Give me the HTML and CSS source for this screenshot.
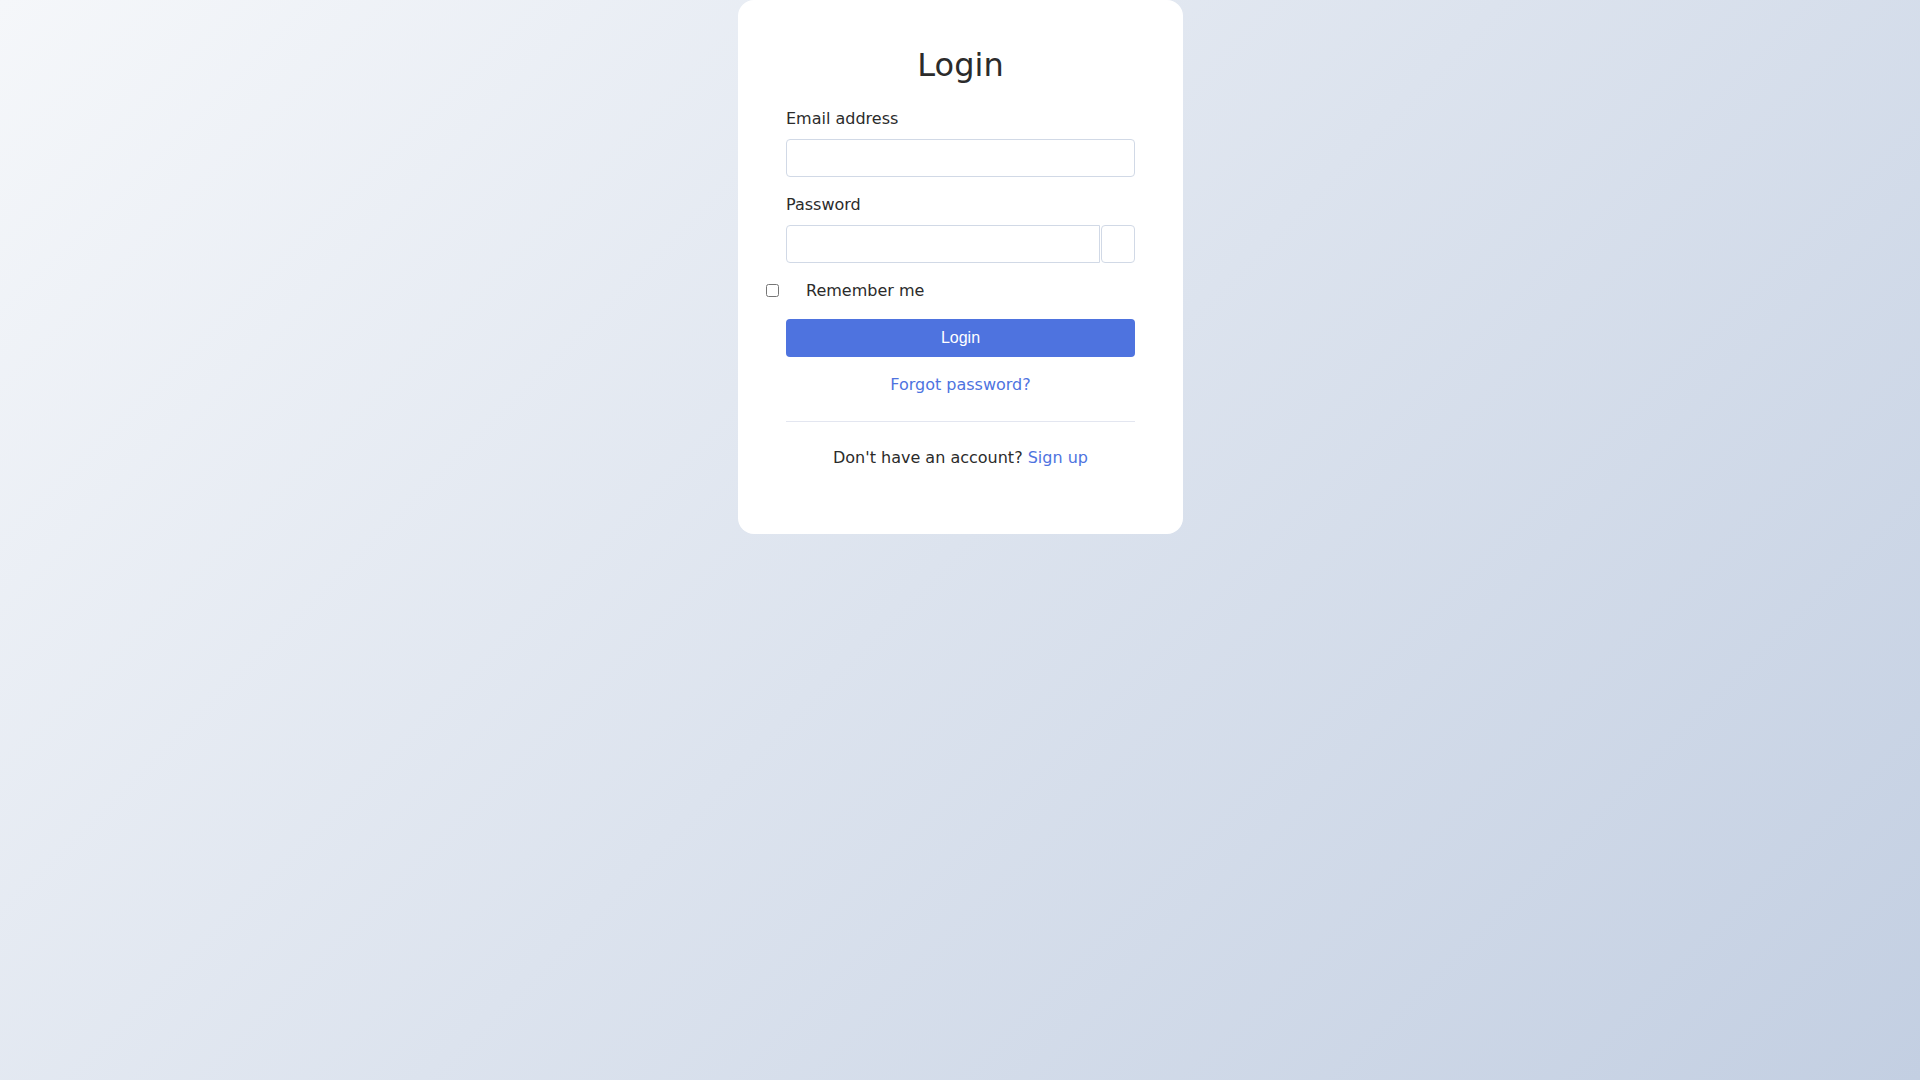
FILE: index.html
```html
<!DOCTYPE html>
<html lang="en">
<head>
<meta charset="utf-8">
<title>Login</title>
<link rel="stylesheet" href="styles.css">
</head>
<body>
<main class="page">
  <section class="card">
    <h1 class="title">Login</h1>
    <form class="form">
      <div class="group">
        <label class="label" for="email">Email address</label>
        <input class="input" id="email" type="email">
      </div>
      <div class="group">
        <label class="label" for="password">Password</label>
        <div class="input-row">
          <input class="input input-pass" id="password" type="password">
          <button class="toggle" type="button"></button>
        </div>
      </div>
      <div class="check-row">
        <input class="check" id="remember" type="checkbox">
        <label class="check-label" for="remember">Remember me</label>
      </div>
      <button class="btn" type="button">Login</button>
      <div class="forgot"><a class="link" href="#">Forgot password?</a></div>
    </form>
    <hr class="divider">
    <p class="signup">Don't have an account? <a class="link" href="#">Sign up</a></p>
  </section>
</main>
</body>
</html>
```
FILE: styles.css
```css
html, body {
  margin: 0;
  padding: 0;
  height: 100%;
}
body {
  background: linear-gradient(135deg, #f5f7fa 0%, #c3cfe2 100%);
  font-family: "DejaVu Sans", sans-serif;
  font-size: 16px;
  line-height: 1.5;
  color: #2b2b2b;
}
.page {
  display: flex;
  justify-content: center;
  align-items: flex-start;
  min-height: 100%;
}
.card {
  box-sizing: border-box;
  width: 445px;
  margin-left: 1px;
  background: #fff;
  border-radius: 16px;
  padding: 48px 48px 48px;
}
.title {
  margin: 0 0 24px;
  font-size: 32px;
  line-height: 35px;
  font-weight: 400;
  text-align: center;
  color: #2b2b2b;
}
.form {
  display: flex;
  flex-direction: column;
}
.group {
  margin-bottom: 16px;
}
.label {
  display: block;
  margin-bottom: 8px;
}
.input {
  display: block;
  box-sizing: border-box;
  width: 100%;
  height: 38px;
  padding: 6px 12px;
  border: 1px solid #d1d9e6;
  border-radius: 4px;
  font: inherit;
  background: #fff;
  outline: none;
}
.input-row {
  display: flex;
  gap: 1px;
}
.input-pass {
  flex: 1;
  border-radius: 4px 0 0 4px;
}
.toggle {
  box-sizing: border-box;
  width: 34px;
  height: 38px;
  margin: 0;
  padding: 0;
  border: 1px solid #d1d9e6;
  border-radius: 4px;
  background: #fff;
}
.check-row {
  display: flex;
  align-items: center;
  margin: 0 0 16px -20px;
  height: 24px;
}
.check {
  width: 13px;
  height: 13px;
  margin: -2px 0 0;
}
.check-label {
  margin-left: 27px;
}
.btn {
  box-sizing: border-box;
  width: 100%;
  height: 38px;
  border: none;
  border-radius: 4px;
  background: #4e73df;
  color: #fff;
  font-family: "Liberation Sans", Arial, sans-serif;
  font-size: 16px;
}
.forgot {
  margin-top: 16px;
  text-align: center;
}
.link {
  color: #4e73df;
  text-decoration: none;
}
.divider {
  margin: 24px 0;
  border: 0;
  border-top: 1px solid #e3e6f0;
}
.signup {
  margin: 0 0 16px;
  text-align: center;
}
```
